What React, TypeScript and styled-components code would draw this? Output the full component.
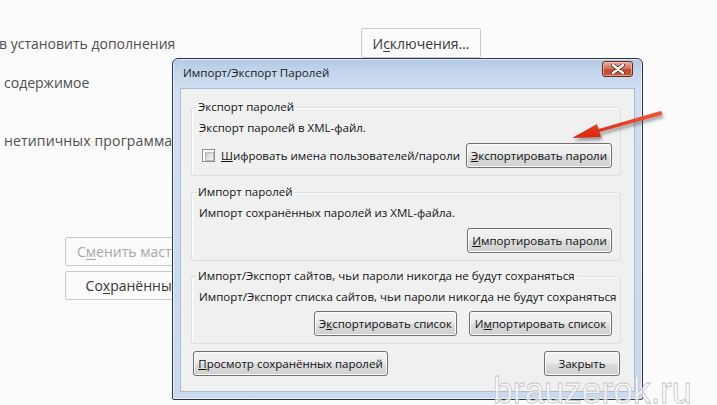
import React from "react";
import styled, { createGlobalStyle } from "styled-components";

const Global = createGlobalStyle`
  html, body { margin: 0; padding: 0; background: #fbfbfb; }
  * { box-sizing: border-box; }
`;

const Page = styled.div`
  position: relative;
  width: 717px;
  height: 405px;
  overflow: hidden;
  background: #fbfbfb;
  font-family: "Open Sans", "Noto Sans", sans-serif;
`;

/* ---------- background settings page ---------- */
const Settings = styled.div`
  display: flex;
  flex-direction: column;
  padding-top: 28px;
  color: #4f4f4f;
  font-size: 14px;
`;

const TopRow = styled.div`
  display: flex;
  align-items: center;
  height: 30px;
`;

const SettingText = styled.div<{ $indent?: number; $top?: number }>`
  line-height: 20px;
  white-space: nowrap;
  padding-left: ${(p) => p.$indent ?? 0}px;
  margin-top: ${(p) => p.$top ?? 0}px;
`;

const TopText = styled(SettingText)`
  width: 362px;
  margin-left: -1px;
  padding-top: 2px;
`;

const LongText = styled(SettingText)`
  letter-spacing: 0.15px;
`;

const PageButton = styled.div<{ $disabled?: boolean; $width: number; $height: number }>`
  display: flex;
  align-items: center;
  justify-content: center;
  width: ${(p) => p.$width}px;
  height: ${(p) => p.$height}px;
  border: 1px solid #c8c8c8;
  border-radius: 2px;
  background: #fbfbfb;
  color: ${(p) => (p.$disabled ? "#a8a8a8" : "#363636")};
  font-size: 14px;
  white-space: nowrap;
  u { text-decoration: underline; text-underline-offset: 2px; }
`;

const PageButtons = styled.div`
  display: flex;
  flex-direction: column;
  gap: 5px;
  margin-top: 86px;
  margin-left: 65px;
`;

/* ---------- dialog window ---------- */
const Window = styled.div`
  position: absolute;
  left: 172px;
  top: 58px;
  width: 471px;
  height: 342px;
  border: 1px solid #2b3440;
  border-radius: 6px 6px 2px 2px;
  background: linear-gradient(#b2c7e2 0px, #c5d7ee 14px, #cfdef1 30px, #c9daef 100%);
  box-shadow: 0 0 0 1px rgba(255, 255, 255, 0.6) inset;
  display: flex;
  flex-direction: column;
  font-family: "Open Sans", "Noto Sans", sans-serif;
  font-size: 11.5px;
  color: #111;
`;

const TitleBar = styled.div`
  height: 29px;
  display: flex;
  align-items: center;
  padding: 0 9px 2px 10px;
`;

const Title = styled.div`
  flex: 1;
  font-size: 11.6px;
  color: #1a1a1a;
`;

const CloseButton = styled.div`
  width: 31px;
  height: 16px;
  margin-top: -8px;
  border: 1px solid #5e2a20;
  border-radius: 3px;
  background: linear-gradient(#e6a896 0%, #d5775f 45%, #c14a30 55%, #c85a3c 100%);
  box-shadow: inset 0 0 0 1px rgba(255, 220, 210, 0.55);
  display: flex;
  align-items: center;
  justify-content: center;
`;

const Client = styled.div`
  flex: 1;
  margin: 0 7px 7px 7px;
  background: #f0f0f0;
  border: 1px solid #a9bcd5;
  padding: 11px 13px 0 10px;
  display: flex;
  flex-direction: column;
`;

const Group = styled.fieldset<{ $top: number; $gap: number }>`
  margin: ${(p) => p.$top}px 0 0 0;
  padding: 6px 8px 7px 7px;
  border: 1px solid #d5dfe5;
  border-radius: 3px;
  min-width: 0;
  display: flex;
  flex-direction: column;
  gap: ${(p) => p.$gap}px;
  box-shadow: inset 1px 1px 0 #fff;
`;

const Legend = styled.legend`
  padding: 0 2px;
  margin-left: -3px;
  line-height: 14px;
  font-size: 11.5px;
  color: #111;
`;

const Line = styled.div`
  line-height: 16px;
  white-space: nowrap;
`;

const Row = styled.div<{ $gap?: number }>`
  display: flex;
  align-items: center;
  justify-content: flex-end;
  gap: ${(p) => p.$gap ?? 0}px;
`;

const CheckLabel = styled.label`
  display: flex;
  align-items: center;
  gap: 6px;
  margin-left: 3px;
  margin-right: auto;
  white-space: nowrap;
`;

const CheckBox = styled.span`
  width: 13px;
  height: 13px;
  border: 1px solid #8e8f8f;
  background: #fff;
  display: inline-block;
  &::after {
    content: "";
    display: block;
    margin: 2px;
    width: 7px;
    height: 7px;
    background: linear-gradient(135deg, #cbcfd5, #f4f4f4);
    border: 1px solid #b8bcc2;
  }
`;

const WinButton = styled.div<{ $width: number }>`
  width: ${(p) => p.$width}px;
  height: 25px;
  border: 1px solid #707070;
  border-radius: 3px;
  background: linear-gradient(#f3f3f3 0%, #ebebeb 48%, #dddddd 52%, #cfcfcf 100%);
  box-shadow: inset 0 0 0 1px #fcfcfc;
  display: flex;
  align-items: center;
  justify-content: center;
  white-space: nowrap;
  color: #111;
  font-size: 11.5px;
  padding-bottom: 1px;
  u { text-decoration: underline; text-underline-offset: 1px; }
`;

const BottomRow = styled.div`
  display: flex;
  justify-content: space-between;
  margin: 7px 1px 0 2px;
`;

/* ---------- overlays ---------- */
const ArrowSvg = styled.svg`
  position: absolute;
  left: 560px;
  top: 100px;
  overflow: visible;
`;

const Watermark = styled.div`
  position: absolute;
  left: 493px;
  top: 373px;
  font-family: "Liberation Sans", Arial, sans-serif;
  font-size: 36px;
  line-height: 36px;
  letter-spacing: -0.3px;
  color: rgba(255, 255, 255, 0.7);
  -webkit-text-stroke: 0.8px #c6c6c6;
  white-space: nowrap;
  pointer-events: none;
`;

export default function App() {
  return (
    <>
      <Global />
      <Page>
        <Settings>
          <TopRow>
            <TopText>в установить дополнения</TopText>
            <PageButton $width={120} $height={30}>
              <span>
                И<u>с</u>ключения…
              </span>
            </PageButton>
          </TopRow>
          <SettingText $indent={4} $top={15}>
            содержимое
          </SettingText>
          <LongText $indent={4} $top={38}>
            нетипичных программах
          </LongText>
          <PageButtons>
            <PageButton $disabled $width={200} $height={29}>
              <span>
                С<u>м</u>енить мастер-пароль…
              </span>
            </PageButton>
            <PageButton $width={200} $height={29}>
              <span>
                Со<u>х</u>ранённые пароли…
              </span>
            </PageButton>
          </PageButtons>
        </Settings>

        <Window>
          <TitleBar>
            <Title>Импорт/Экспорт Паролей</Title>
            <CloseButton>
              <svg width="14" height="10" viewBox="0 0 14 10">
                <path
                  d="M2 1 L12 9 M12 1 L2 9"
                  stroke="#5a2a20"
                  strokeWidth="4"
                  strokeLinecap="round"
                />
                <path
                  d="M2 1 L12 9 M12 1 L2 9"
                  stroke="#ffffff"
                  strokeWidth="2.4"
                  strokeLinecap="round"
                />
              </svg>
            </CloseButton>
          </TitleBar>
          <Client>
            <Group $top={0} $gap={7}>
              <Legend>Экспорт паролей</Legend>
              <Line>Экспорт паролей в XML-файл.</Line>
              <Row>
                <CheckLabel>
                  <CheckBox />
                  <span>
                    <u>Ш</u>ифровать имена пользователей/пароли
                  </span>
                </CheckLabel>
                <WinButton $width={146}>
                  <span>
                    <u>Э</u>кспортировать пароли
                  </span>
                </WinButton>
              </Row>
            </Group>
            <Group $top={9} $gap={7}>
              <Legend>Импорт паролей</Legend>
              <Line>Импорт сохранённых паролей из XML-файла.</Line>
              <Row>
                <WinButton $width={145}>
                  <span>
                    <u>И</u>мпортировать пароли
                  </span>
                </WinButton>
              </Row>
            </Group>
            <Group $top={8} $gap={6}>
              <Legend>Импорт/Экспорт сайтов, чьи пароли никогда не будут сохраняться</Legend>
              <Line>Импорт/Экспорт списка сайтов, чьи пароли никогда не будут сохраняться</Line>
              <Row $gap={12}>
                <WinButton $width={143}>
                  <span>
                    Э<u>к</u>спортировать список
                  </span>
                </WinButton>
                <WinButton $width={143}>
                  <span>
                    И<u>м</u>портировать список
                  </span>
                </WinButton>
              </Row>
            </Group>
            <BottomRow>
              <WinButton $width={195}>
                <span>
                  <u>П</u>росмотр сохранённых паролей
                </span>
              </WinButton>
              <WinButton $width={76}>Закрыть</WinButton>
            </BottomRow>
          </Client>
        </Window>

        <ArrowSvg width="120" height="55" viewBox="0 0 120 55">
          <defs>
            <filter id="arrowShadow" x="-20%" y="-50%" width="140%" height="200%">
              <feGaussianBlur stdDeviation="1.6" />
            </filter>
            <linearGradient id="arrowFill" x1="0" y1="0" x2="0" y2="1">
              <stop offset="0" stopColor="#f25a3a" />
              <stop offset="1" stopColor="#d8260e" />
            </linearGradient>
          </defs>
          <path
            d="M12 38 L37 24 L38.6 29 L100.4 10.9 Q103 12 101.6 15.1 L39.4 32 L41 37 Z"
            fill="rgba(60,60,60,0.45)"
            transform="translate(1.5 3)"
            filter="url(#arrowShadow)"
          />
          <path
            d="M12 38 L37 24 L38.6 29 L100.4 10.9 Q103 12 101.6 15.1 L39.4 32 L41 37 Z"
            fill="url(#arrowFill)"
          />
        </ArrowSvg>

        <Watermark>brauzerok.ru</Watermark>
      </Page>
    </>
  );
}
